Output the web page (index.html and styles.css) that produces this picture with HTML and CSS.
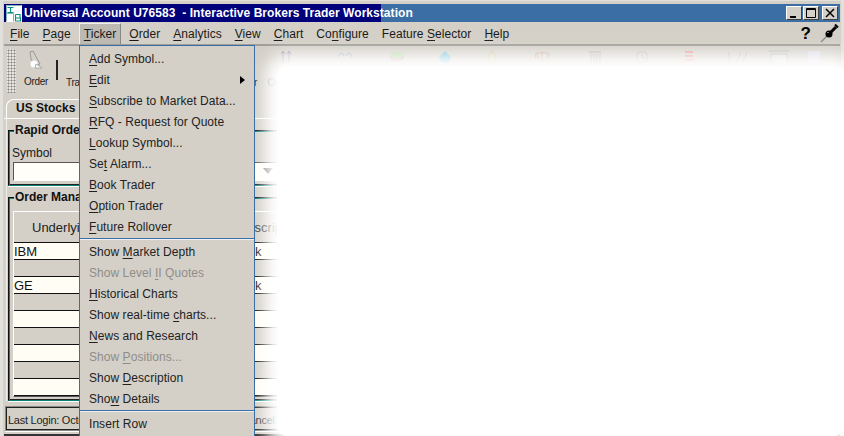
FILE: index.html
```html
<!DOCTYPE html>
<html lang="en">
<head>
<meta charset="utf-8">
<title>Universal Account U76583 - Interactive Brokers Trader Workstation</title>
<link rel="stylesheet" href="styles.css">
</head>
<body>
<div class="window">
  <header class="titlebar">
    <svg class="app-icon" width="16" height="17" viewBox="0 0 16 17"><rect width="16" height="17" fill="#fff"/><path d="M.5.500h15M.5.500v16M.5 8.500h7M7.500 8.500v8" stroke="#7fb5b0" fill="none"/><path d="M1.500 2.500h6M4.500 2.500v5M1.500 7.500h6" stroke="#0a8f80" stroke-width="1.200" fill="none"/><path d="M9.500 9.500v6.500h5v-3h-5M9.500 9.500h4.500v3" stroke="#0a8f80" stroke-width="1.200" fill="none"/></svg>
    <span class="title-text">Universal Account U76583&nbsp; - Interactive Brokers Trader Workstation</span>
    <div class="win-buttons">
      <span class="win-btn"><svg width="14" height="12" viewBox="0 0 14 12"><path d="M3 10h6" stroke="#000" stroke-width="2"/></svg></span>
      <span class="win-btn"><svg width="14" height="12" viewBox="0 0 14 12"><path d="M2.500 1.500h9v9h-9zM2.500 2.500h9" stroke="#000" fill="none"/></svg></span>
      <span class="win-btn close"><svg width="14" height="12" viewBox="0 0 14 12"><path d="M3 2l8 8M11 2l-8 8" stroke="#000" stroke-width="1.500"/></svg></span>
    </div>
  </header>
  <nav class="menubar">
    <span class="m-item"><u>F</u>ile</span>
    <span class="m-item"><u>P</u>age</span>
    <span class="m-item active"><u>T</u>icker</span>
    <span class="m-item"><u>O</u>rder</span>
    <span class="m-item"><u>A</u>nalytics</span>
    <span class="m-item"><u>V</u>iew</span>
    <span class="m-item"><u>C</u>hart</span>
    <span class="m-item">Co<u>n</u>figure</span>
    <span class="m-item">Feature <u>S</u>elector</span>
    <span class="m-item"><u>H</u>elp</span>
    <span class="help">?</span>
    <svg class="pin" width="20" height="20" viewBox="0 0 20 20"><path d="M1 19l6-6" stroke="#888" stroke-width="1.500"/><circle cx="9" cy="11" r="3.500" fill="#000"/><path d="M10 10l6-6" stroke="#000" stroke-width="3"/><path d="M15 1.500l3 3" stroke="#000" stroke-width="2"/><path d="M7.500 10l1-1" stroke="#fff"/></svg>
  </nav>
  <section class="toolbar">
    <div class="gripper"></div>
    <div class="tool order">
      <svg width="22" height="24" viewBox="0 0 22 24"><path d="M5 3l3-1 7 13-4 2-5-7z" fill="#d4d0c8" stroke="#999"/><circle cx="9" cy="15" r="3.500" fill="#fff"/><path d="M11 15l6 4h-7z" fill="#fff" stroke="#aaa"/></svg>
      <span>Order</span>
    </div>
    <div class="tool-sep"></div>
    <div class="tool trade"><span>Trade</span></div>
    <div class="tail-labels"><span>Broker</span><span class="tail-o">Order</span></div>
    <div class="faint-icons">
      <svg width="14" height="14" viewBox="0 0 14 14"><path d="M4 1v12M10 1v12M2 4l2-3 2 3M8 4l2-3 2 3" stroke="#8a8ab0" fill="none"/></svg>
      <svg width="16" height="14" viewBox="0 0 16 14"><path d="M1 7c3-5 4-5 6-1M9 6c2-4 4-4 6 1" stroke="#8a8ab0" fill="none"/></svg>
      <svg width="16" height="14" viewBox="0 0 16 14"><ellipse cx="8" cy="7" rx="7" ry="5" fill="#caa"/><ellipse cx="8" cy="5" rx="6" ry="3" fill="#ad9"/></svg>
      <svg width="16" height="14" viewBox="0 0 16 14"><path d="M2 7l6-6 6 6-3 6H5z" fill="#6bd"/></svg>
      <svg width="14" height="14" viewBox="0 0 14 14"><path d="M4 13V5l3-4 3 4v8" stroke="#db6" fill="none"/></svg>
      <svg width="16" height="14" viewBox="0 0 16 14"><path d="M8 1v12M2 3h12M2 3l-1 5h4zM14 3l-1 5h4z" stroke="#c98" fill="none"/></svg>
      <svg width="14" height="16" viewBox="0 0 14 16"><path d="M1 2h12M3 4v11M6 4v11M9 4v11M12 4v11" stroke="#999" fill="none"/></svg>
      <svg width="14" height="14" viewBox="0 0 14 14"><rect x="2" y="2" width="10" height="10" rx="3" fill="none" stroke="#aaa"/><path d="M7 4v4h3" stroke="#aaa" fill="none"/></svg>
      <svg width="10" height="14" viewBox="0 0 10 14"><path d="M1 2h8M1 6h8M1 10h8" stroke="#e88" stroke-width="2" fill="none"/></svg>
      <svg width="22" height="14" viewBox="0 0 22 14"><path d="M2 2v11M9 13l5-11M15 13l5-11" stroke="#a9a9c8" fill="none"/></svg>
      <svg width="20" height="16" viewBox="0 0 20 16"><path d="M0 1h20M2 4h16v12H2z" fill="#ddd" stroke="#aaa"/></svg>
      <svg width="14" height="14" viewBox="0 0 14 14"><rect x="1" y="1" width="12" height="12" fill="#dde"/></svg>
    </div>
  </section>
  <section class="tabs">
    <div class="tab">US Stocks</div>
  </section>
  <main class="panel">
    <fieldset class="group rapid">
      <legend>Rapid Order Entry</legend>
      <label class="sym-label">Symbol</label>
      <div class="rapid-row">
        <div class="sym-input"></div>
        <span class="combo-arrow"></span>
      </div>
    </fieldset>
    <fieldset class="group manage">
      <legend>Order Management</legend>
      <div class="table">
        <div class="thead"><span class="th-a">Underlying</span><span class="th-b">Description</span></div>
        <div class="row cream"><span class="col-a">IBM</span><span class="col-b">Stock</span></div>
        <div class="row grey"></div>
        <div class="row cream"><span class="col-a">GE</span><span class="col-b">Stock</span></div>
        <div class="row grey"></div>
        <div class="row cream"></div>
        <div class="row grey"></div>
        <div class="row cream"></div>
        <div class="row grey"></div>
        <div class="row cream"></div>
      </div>
    </fieldset>
  </main>
  <footer class="status">
    <div class="status-box">
      <span class="login">Last Login: October 12</span>
      <span class="cancel">Cancel</span>
    </div>
  </footer>
</div>

<div class="fade"></div>

<div class="menu">
  <div class="mi"><span><u>A</u>dd Symbol...</span></div>
  <div class="mi"><span><u>E</u>dit</span><i class="arrow"></i></div>
  <div class="mi"><span><u>S</u>ubscribe to Market Data...</span></div>
  <div class="mi"><span><u>R</u>FQ - Request for Quote</span></div>
  <div class="mi"><span><u>L</u>ookup Symbol...</span></div>
  <div class="mi"><span>Se<u>t</u> Alarm...</span></div>
  <div class="mi"><span><u>B</u>ook Trader</span></div>
  <div class="mi"><span><u>O</u>ption Trader</span></div>
  <div class="mi"><span><u>F</u>uture Rollover</span></div>
  <div class="sep"></div>
  <div class="mi"><span>Show <u>M</u>arket Depth</span></div>
  <div class="mi off"><span>Show Level <u>I</u>I Quotes</span></div>
  <div class="mi"><span><u>H</u>istorical Charts</span></div>
  <div class="mi"><span>Show real-time <u>c</u>harts...</span></div>
  <div class="mi"><span><u>N</u>ews and Research</span></div>
  <div class="mi off"><span>Show <u>P</u>ositions...</span></div>
  <div class="mi"><span>Show <u>D</u>escription</span></div>
  <div class="mi"><span>Sho<u>w</u> Details</span></div>
  <div class="sep"></div>
  <div class="mi"><span>Insert Row</span></div>
</div>
</body>
</html>
```
FILE: styles.css
```css
* { box-sizing: border-box; }
html, body { margin: 0; padding: 0; width: 844px; height: 436px; overflow: hidden; background: #fff; }
body { position: relative; font-family: "Liberation Sans", Arial, sans-serif; font-size: 12px; color: #1a1a1a; }
u { text-underline-offset: 2px; text-decoration-thickness: 1px; }

.window { width: 844px; height: 436px; background: #d4d0c8; display: flex; flex-direction: column; padding: 3px 1px 0; border: solid #e2e0da; border-width: 1px 3px 0; overflow: hidden; }

.titlebar { height: 18px; flex: none; display: flex; align-items: center; padding-left: 2px; background: linear-gradient(to right, #00007a 377px, #3a6ea5 377px); color: #fff; }
.app-icon { flex: none; margin-right: 2px; }
.title-text { font-weight: bold; font-size: 12px; letter-spacing: 0.05px; white-space: pre; margin-top: -1px; }
.win-buttons { margin-left: auto; display: flex; gap: 1px; padding-right: 2px; }
.win-btn { width: 16px; height: 14px; background: #d4d0c8; border: 1px solid; border-color: #fff #404040 #404040 #fff; display: flex; align-items: center; justify-content: center; overflow: hidden; }
.win-btn.close { margin-left: 2px; }

.menubar { height: 24px; flex: none; display: flex; align-items: flex-end; border-bottom: 2px solid #a09e98; padding-left: 1px; letter-spacing: 0.05px; }
.m-item { padding: 0 4px; margin-right: 3px; height: 21px; line-height: 21px; white-space: nowrap; border: 1px solid transparent; border-bottom: none; }
.m-item.active { background: #bdbab4; border-color: #eee #888 transparent #eee; }
.help { margin-left: auto; font-weight: bold; font-size: 17px; line-height: 21px; color: #000; margin-right: 9px; }
.pin { margin-bottom: 1px; }

.toolbar { height: 54px; flex: none; display: flex; align-items: flex-start; padding: 3px 12px 0 3px; }
.gripper { width: 9px; height: 44px; flex: none; background-image: radial-gradient(circle at center, #8c8a86 45%, #e8e6e0 50%); background-size: 3px 3px; }
.tool { display: flex; flex-direction: column; align-items: center; font-size: 10px; letter-spacing: -0.3px; color: #222; flex: none; }
.order { width: 24px; margin-left: 8px; }
.order span { margin-top: 3px; }
.tool-sep { width: 2px; height: 20px; flex: none; background: #222; margin: 11px 8px 0 8px; }
.trade { margin-top: 28px; width: 30px; align-items: flex-start; }
.tail-labels { width: 27px; flex: none; margin: 28px 0 0 132px; display: flex; gap: 10px; justify-content: flex-end; font-size: 10px; color: #222; white-space: nowrap; }
.tail-o { margin-right: -38px; color: #777; }
.faint-icons { display: grid; flex: none; margin-left: auto; margin-top: 1px; grid-template-columns: 61.5px 56px 49px 47.5px 45.5px 54.5px 52.5px 41.5px 51px 47.5px 35px 35px; justify-items: center; align-items: start; opacity: .8; }

.tabs { height: 19px; flex: none; padding-left: 2px; border-bottom: 1px solid #fff; display: flex; align-items: flex-end; }
.tab { width: 90px; height: 19px; font-weight: bold; font-size: 12px; color: #111; padding: 1px 0 0 9px; border: 1px solid #fff; border-right-color: #888; border-bottom: none; border-top-left-radius: 8px; white-space: nowrap; }

.panel { flex: 1; min-height: 0; margin-left: 2px; border-left: 1px solid #f0eee8; padding: 4px 0 0 1px; display: flex; flex-direction: column; gap: 4px; }
.group { margin: 0; border: 1px solid #111; border-right: none; border-bottom-color: #0a7f78; padding: 0 0 0 4px; min-width: 0; flex: none; box-shadow: inset 1px 0 0 #0a7f78, inset 0 1px 0 #0a7f78, inset 0 -1px 0 #222, 0 1px 0 #fff; }
.group legend { font-weight: bold; font-size: 12px; color: #111; background: #d4d0c8; padding: 0 1px; margin-left: 1px; line-height: 14px; white-space: nowrap; }
.rapid { height: 63px; }
.sym-label { display: block; margin-top: 9px; font-size: 12px; line-height: 14px; margin-left: -1px; }
.rapid-row { display: flex; margin-top: 2px; position: relative; }
.sym-input { height: 19px; width: 100%; background: #fffef8; border: 1px solid; border-color: #555 #fff #fff #555; }
.combo-arrow { position: absolute; left: 250px; top: 6px; width: 0; height: 0; border: 5px solid transparent; border-top: 6px solid #777; border-bottom: none; }
.manage { height: 211px; }
.table { margin-top: 7px; border: 1px solid #fff; border-right: none; border-bottom: 1px solid #555; }
.thead { height: 31px; display: flex; align-items: center; font-size: 13px; background: #d4d0c8; border-bottom: 1px solid #111; color: #222; padding-top: 1px; white-space: nowrap; }
.th-a { width: 224px; flex: none; padding-left: 18px; }
.row { height: 17px; display: flex; align-items: center; border-bottom: 1px solid #111; font-size: 13px; color: #111; }
.row.cream { background: #fffdf4; }
.row.grey { background: #d4d0c8; }
.col-a { width: 215px; flex: none; white-space: nowrap; }
.col-b { white-space: nowrap; }

.status { height: 30px; flex: none; margin-top: 5px; padding-left: 1px; border-bottom: 2px solid #333; }
.status-box { height: 25px; border: 1px solid #8a8880; box-shadow: inset 1px 1px 0 #222, inset 0 -1px 0 #222, 0 1px 0 #fff; display: flex; align-items: center; padding: 2px 0 0 2px; font-size: 11px; letter-spacing: -0.25px; color: #222; white-space: nowrap; }
.login { width: 234px; flex: none; }

.fade { position: absolute; left: 277px; top: 66px; right: 0; bottom: 0; background: #fff; border-radius: 10px; box-shadow: 0 0 16px 12px #fff; }

.menu { position: absolute; left: 79px; top: 45px; width: 176px; bottom: 0; overflow: hidden; background: #d4d0c8; border: 1px solid #3a6ea5; border-bottom: none; padding-top: 2px; letter-spacing: 0.05px; color: #222; }
.mi { height: 21px; flex: none; display: flex; align-items: center; justify-content: space-between; padding: 0 9px; white-space: nowrap; }
.mi.off { color: #8f8d88; }
.sep { height: 2px; margin: 1px 0; background: #3a6ea5; border-bottom: 1px solid #f0f0f0; }
.arrow { width: 0; height: 0; border: 4px solid transparent; border-left: 5px solid #000; border-right: none; }
```
